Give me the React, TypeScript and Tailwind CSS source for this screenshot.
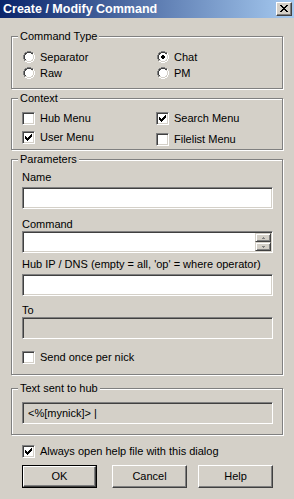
import React from 'react';

type PixProps = { rows: string[]; colors: Record<string, string> };
function Pix({ rows, colors }: PixProps) {
  const h = rows.length;
  const w = rows[0].length;
  const rects: React.ReactNode[] = [];
  rows.forEach((r, y) =>
    r.split('').forEach((c, x) => {
      if (colors[c]) rects.push(<rect key={`${x}-${y}`} x={x} y={y} width={1} height={1} fill={colors[c]} />);
    })
  );
  return (
    <svg width={w} height={h} viewBox={`0 0 ${w} ${h}`} shapeRendering="crispEdges" className="block shrink-0">
      {rects}
    </svg>
  );
}

const RADIO = [
  '....GGGG....',
  '..GGDDDDGG..',
  '.GDDWWWWDDH.',
  '.GDWWWWWWLH.',
  'GDWWWWWWWWLH',
  'GDWWWWWWWWLH',
  'GDWWWWWWWWLH',
  'GDWWWWWWWWLH',
  '.GDWWWWWWLH.',
  '.GLLWWWWLLH.',
  '..HHLLLLHH..',
  '....HHHH....',
];
const RADIO_ON = [
  '....GGGG....',
  '..GGDDDDGG..',
  '.GDDWWWWDDH.',
  '.GDWWWWWWLH.',
  'GDWWWKKWWWLH',
  'GDWWKKKKWWLH',
  'GDWWKKKKWWLH',
  'GDWWWKKWWWLH',
  '.GDWWWWWWLH.',
  '.GLLWWWWLLH.',
  '..HHLLLLHH..',
  '....HHHH....',
];
const RCOL = { G: '#808080', D: '#404040', W: '#ffffff', L: '#d4d0c8', H: '#ffffff', K: '#000000' };

const CHECK = [
  '......X',
  '.....XX',
  'X...XXX',
  'XX.XXX.',
  'XXXXX..',
  '.XXX...',
  '..X....',
];

const XGLYPH = [
  'XX....XX',
  '.XX..XX.',
  '..XXXX..',
  '...XX...',
  '..XXXX..',
  '.XX..XX.',
  'XX....XX',
];

const ARROW_UP = ['..G..', '.GGG.'];
const ARROW_DOWN = ['.GGG.', '..G..'];

function Radio({ checked, label }: { checked?: boolean; label: string }) {
  return (
    <div className="h-[16px] flex items-center gap-[5px]">
      <Pix rows={checked ? RADIO_ON : RADIO} colors={RCOL} />
      <span>{label}</span>
    </div>
  );
}

function CheckBox({ checked }: { checked?: boolean }) {
  return (
    <div className="w-[13px] h-[13px] shrink-0 bg-white border border-t-[#808080] border-l-[#808080] border-r-white border-b-white shadow-[inset_1px_1px_0_#404040,inset_-1px_-1px_0_#d4d0c8] flex items-center justify-center">
      {checked && <Pix rows={CHECK} colors={{ X: '#000000' }} />}
    </div>
  );
}

function CheckRow({ checked, label }: { checked?: boolean; label: string }) {
  return (
    <div className="h-[13px] flex items-center gap-[5px]">
      <CheckBox checked={checked} />
      <span className="whitespace-nowrap">{label}</span>
    </div>
  );
}

function Legend({ text }: { text: string }) {
  return (
    <span className="absolute left-[6px] top-[-7px] bg-[#d4d0c8] px-[2px] h-[13px] leading-[13px] whitespace-nowrap">
      {text}
    </span>
  );
}

const groupCls =
  'relative ml-[11px] w-[272px] shrink-0 border border-[#808080] shadow-[inset_1px_1px_0_#ffffff,1px_1px_0_#ffffff]';

const editCls =
  'h-[22px] w-[251px] shrink-0 border border-t-[#808080] border-l-[#808080] border-r-white border-b-white shadow-[inset_1px_1px_0_#404040,inset_-1px_-1px_0_#d4d0c8]';

function ScrollBtn({ up }: { up?: boolean }) {
  return (
    <div className="w-[16px] h-[9px] bg-[#d4d0c8] border border-t-[#d4d0c8] border-l-[#d4d0c8] border-r-[#404040] border-b-[#404040] shadow-[inset_1px_1px_0_#ffffff,inset_-1px_-1px_0_#808080] flex items-center justify-center">
      <Pix rows={up ? ARROW_UP : ARROW_DOWN} colors={{ G: '#808080' }} />
    </div>
  );
}

function Button({ label, def }: { label: string; def?: boolean }) {
  const inner = (
    <div className="h-full w-full border border-t-white border-l-white border-r-[#404040] border-b-[#404040] shadow-[inset_-1px_-1px_0_#808080] flex items-center justify-center">
      {label}
    </div>
  );
  if (def) {
    return <div className="w-[75px] h-[23px] shrink-0 border border-black bg-[#d4d0c8]">{inner}</div>;
  }
  return <div className="w-[75px] h-[23px] shrink-0 bg-[#d4d0c8]">{inner}</div>;
}

export default function App() {
  return (
    <div className="w-[294px] h-[499px] overflow-hidden bg-[#d4d0c8] text-black text-[11px] leading-[13px] font-['Liberation_Sans',Arial,sans-serif] flex flex-col">
      {/* Title bar */}
      <div className="h-[18px] shrink-0 flex items-center justify-between pl-[3px] pr-[2px] bg-[linear-gradient(to_right,#0a246a,#a6caf0)]">
        <span className="text-white font-bold text-[12.5px] leading-[14px] whitespace-nowrap">Create / Modify Command</span>
        <div className="w-[16px] h-[14px] bg-[#d4d0c8] border border-t-white border-l-white border-r-[#404040] border-b-[#404040] shadow-[inset_-1px_-1px_0_#808080] flex items-center justify-center pr-[1px] pb-[1px]">
          <Pix rows={XGLYPH} colors={{ X: '#000000' }} />
        </div>
      </div>

      {/* Command Type */}
      <div className={`${groupCls} mt-[18px] h-[53px] pt-[12px] pl-[11px]`}>
        <Legend text="Command Type" />
        <div className="grid grid-cols-[134px_1fr]">
          <Radio label="Separator" />
          <Radio label="Chat" checked />
          <Radio label="Raw" />
          <Radio label="PM" />
        </div>
      </div>

      {/* Context */}
      <div className={`${groupCls} mt-[9px] h-[52px] pt-[13px] pl-[10px]`}>
        <Legend text="Context" />
        <div className="grid grid-cols-[134px_1fr]">
          <div className="flex flex-col gap-[6px]">
            <CheckRow label="Hub Menu" />
            <CheckRow label="User Menu" checked />
          </div>
          <div className="flex flex-col gap-[8px]">
            <CheckRow label="Search Menu" checked />
            <CheckRow label="Filelist Menu" />
          </div>
        </div>
      </div>

      {/* Parameters */}
      <div className={`${groupCls} mt-[9px] h-[216px] pl-[10px] flex flex-col`}>
        <Legend text="Parameters" />
        <div className="mt-[11px] h-[13px]">Name</div>
        <div className={`${editCls} mt-[3px] bg-white`} />
        <div className="mt-[9px] h-[13px]">Command</div>
        <div className={`${editCls} bg-white flex justify-end items-center pr-[1px]`}>
          <div className="flex flex-col">
            <ScrollBtn up />
            <ScrollBtn />
          </div>
        </div>
        <div className="mt-[5px] h-[13px] whitespace-nowrap">Hub IP / DNS (empty = all, 'op' = where operator)</div>
        <div className={`${editCls} mt-[3px] bg-white`} />
        <div className="mt-[8px] h-[13px]">To</div>
        <div className={`${editCls} bg-[#d4d0c8]`} />
        <div className="mt-[12px]">
          <CheckRow label="Send once per nick" />
        </div>
      </div>

      {/* Text sent to hub */}
      <div className={`${groupCls} mt-[13px] h-[47px] pt-[13px] pl-[10px]`}>
        <Legend text="Text sent to hub" />
        <div className={`${editCls} bg-[#d4d0c8] flex items-center pl-[5px] whitespace-nowrap`}>
          &lt;%[mynick]&gt; |
        </div>
      </div>

      <div className="mt-[10px] pl-[22px]">
        <CheckRow label="Always open help file with this dialog" checked />
      </div>

      <div className="mt-[7px] pl-[22px] flex">
        <Button label="OK" def />
        <div className="ml-[15px]">
          <Button label="Cancel" />
        </div>
        <div className="ml-[11px]">
          <Button label="Help" />
        </div>
      </div>
    </div>
  );
}
